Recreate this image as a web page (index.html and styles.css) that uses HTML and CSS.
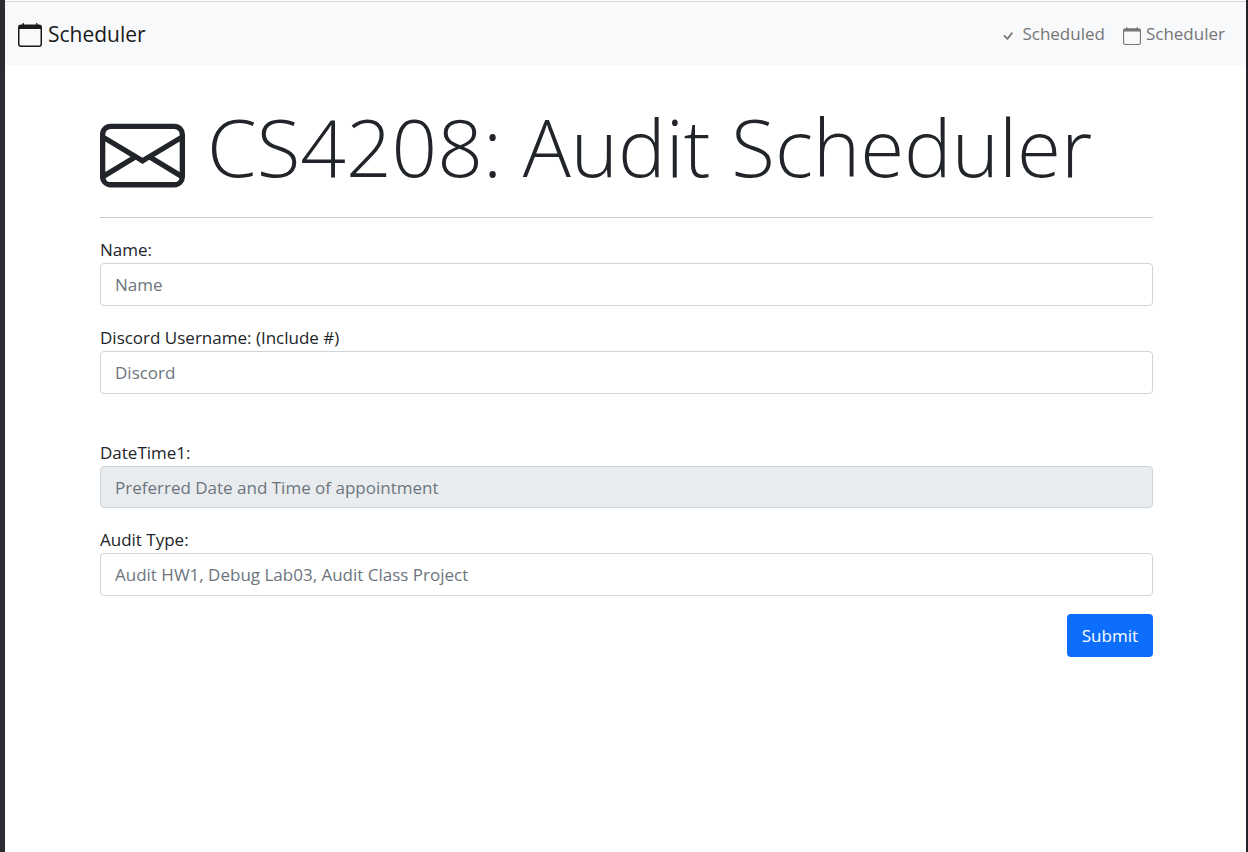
FILE: index.html
```html
<!DOCTYPE html>
<html lang="en">
<head>
<meta charset="utf-8">
<meta name="viewport" content="width=device-width, initial-scale=1">
<title>Audit Scheduler</title>
<link rel="stylesheet" href="styles.css">
</head>
<body>
<svg class="sprite" aria-hidden="true">
  <symbol id="calendar" viewBox="0 0 16 16"><path d="M3.5 0a.5.5 0 0 1 .5.5V1h8V.5a.5.5 0 0 1 1 0V1h1a2 2 0 0 1 2 2v11a2 2 0 0 1-2 2H2a2 2 0 0 1-2-2V3a2 2 0 0 1 2-2h1V.5a.5.5 0 0 1 .5-.5zM1 4v10a1 1 0 0 0 1 1h12a1 1 0 0 0 1-1V4H1z"/></symbol>
</svg>
<nav class="navbar">
  <a class="brand" href="#"><svg class="brand-icon" aria-hidden="true"><use href="#calendar"/></svg>Scheduler</a>
  <div class="nav-links">
    <a class="nav-link" href="#"><svg class="nav-icon" viewBox="0 0 16 16" aria-hidden="true"><path d="M10.97 4.97a.75.75 0 0 1 1.07 1.05l-3.99 4.99a.75.75 0 0 1-1.08.02L4.324 8.384a.75.75 0 1 1 1.06-1.06l2.094 2.093 3.473-4.425a.267.267 0 0 1 .02-.022z"/></svg>Scheduled</a>
    <a class="nav-link" href="#"><svg class="nav-icon" aria-hidden="true"><use href="#calendar"/></svg>Scheduler</a>
  </div>
</nav>
<main class="container">
  <h1 class="title">
    <svg class="title-icon" viewBox="0 0 16 16" aria-hidden="true"><path d="M0 4a2 2 0 0 1 2-2h12a2 2 0 0 1 2 2v8a2 2 0 0 1-2 2H2a2 2 0 0 1-2-2V4zm2-1a1 1 0 0 0-1 1v.217l7 4.2 7-4.2V4a1 1 0 0 0-1-1H2zm13 2.383-4.758 2.855L15 11.114v-5.73zm-.034 6.878L9.271 8.82 8 9.583 6.728 8.82l-5.694 3.44A1 1 0 0 0 2 13h12a1 1 0 0 0 .966-.739zM1 11.114l4.758-2.876L1 5.383v5.73z"/></svg>
    <span>CS4208: Audit Scheduler</span>
  </h1>
  <hr class="rule">
  <form class="form">
    <div class="field">
      <label for="name">Name:</label>
      <input class="control" id="name" type="text" placeholder="Name">
    </div>
    <div class="field field-spaced">
      <label for="discord">Discord Username: (Include #)</label>
      <input class="control" id="discord" type="text" placeholder="Discord">
    </div>
    <div class="field">
      <label for="datetime">DateTime1:</label>
      <input class="control" id="datetime" type="text" placeholder="Preferred Date and Time of appointment" readonly>
    </div>
    <div class="field">
      <label for="audit">Audit Type:</label>
      <input class="control" id="audit" type="text" placeholder="Audit HW1, Debug Lab03, Audit Class Project">
    </div>
    <button class="submit" type="submit">Submit</button>
  </form>
</main>
</body>
</html>
```

FILE: styles.css
```css
* { box-sizing: border-box; }

body {
  margin: 0;
  min-height: 100vh;
  padding-top: 1px;
  border-left: 5px solid #2b2c31;
  border-right: 2px solid #212229;
  background: #fff;
  color: #212529;
  font: 17px/27px "Open Sans", "Noto Sans", sans-serif;
}

svg { fill: currentColor; flex: none; }
.sprite { position: absolute; width: 0; height: 0; }

.navbar {
  display: flex;
  align-items: center;
  justify-content: space-between;
  height: 64px;
  padding: 0 21px 0 13px;
  border-top: 1px solid #d5d8db;
  background: #f8f9fa;
}

.brand, .nav-link {
  display: flex;
  align-items: center;
  text-decoration: none;
}
.brand { gap: 6px; color: #1a1a1a; font-size: 21px; line-height: 28px; }
.brand-icon { width: 24px; height: 24px; margin-top: 3px; }
.nav-links { display: flex; gap: 18px; }
.nav-link { gap: 5px; color: #747577; }
.nav-icon { width: 18px; height: 18px; margin-top: 4px; }

.container {
  margin: 0 auto;
  padding: 36px 93px 0 95px;
}

.title {
  display: flex;
  align-items: flex-start;
  gap: 22px;
  margin: 0;
  font-size: 80px;
  font-weight: 300;
  line-height: 90px;
  white-space: nowrap;
}
.title-icon { width: 85px; height: 85px; margin-top: 12px; }

.rule {
  height: 1px;
  margin: 19px 0 18px;
  border: 0;
  background: #c8c9ca;
}

.form { display: flex; flex-direction: column; }
.field { display: flex; flex-direction: column; margin-bottom: 18px; }
.field-spaced { margin-bottom: 45px; }

.control {
  width: 100%;
  height: 43px;
  padding: 0 14px;
  border: 1px solid #ced4da;
  border-radius: 4px;
  background: #fff;
  color: #212529;
  font: inherit;
}
.control::placeholder { color: #6c757d; opacity: 1; }
.control:read-only { height: 42px; background: #e9ecef; }

.submit {
  align-self: flex-end;
  height: 43px;
  padding: 0 15px;
  border: 0;
  border-radius: 4px;
  background: #0d6efd;
  color: #fff;
  font: inherit;
}
```
